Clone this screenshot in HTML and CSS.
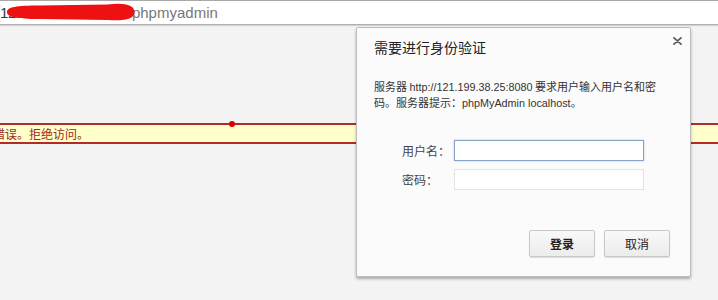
FILE: index.html
```html
<!DOCTYPE html>
<html lang="zh-CN">
<head>
<meta charset="utf-8">
<title>phpmyadmin</title>
<link rel="stylesheet" href="styles.css">
</head>
<body>
<div class="topbar">
  <span class="url"><span class="host">121.199.38.25:8080/</span><span class="path">phpmyadmin</span></span>
  <svg class="scribble" width="140" height="24" viewBox="0 0 140 24"><path d="M7,12 C7,7 16,5.5 40,5.5 L108,4.5 C124,2.5 134.5,5 134.5,12 C134.5,19.5 124,21 108,20 L40,19 C16,19 7,17 7,12 Z" fill="#ee1111"/></svg>
</div>
<div class="page">
  <div class="error">错误。拒绝访问。</div>
  <span class="dot"></span>
</div>
<div class="dialog">
  <div class="head">
    <div class="title">需要进行身份验证</div>
    <svg class="close" width="9" height="8" viewBox="0 0 9 8"><path d="M1,0.8 L8,7.2 M8,0.8 L1,7.2" stroke="#5a5a5a" stroke-width="1.7" stroke-linecap="round"/></svg>
  </div>
  <p class="msg">服务器 <span class="lat">http://121.199.38.25:8080</span> 要求用户输入用户名和密码。服务器提示：<span class="lat">phpMyAdmin localhost</span>。</p>
  <div class="form">
    <label class="lbl">用户名：</label>
    <input class="field focus" type="text">
    <label class="lbl">密码：</label>
    <input class="field" type="password">
  </div>
  <div class="actions">
    <button class="btn primary">登录</button>
    <button class="btn">取消</button>
  </div>
</div>
</body>
</html>
```
FILE: styles.css
```css
html, body {
  margin: 0;
  padding: 0;
}
body {
  width: 718px;
  height: 300px;
  overflow: hidden;
  background: #f3f3f3;
  font-family: "Noto Sans CJK SC", "Liberation Sans", sans-serif;
  position: relative;
}
.topbar {
  position: relative;
  height: 23px;
  background: #fff;
  border-top: 1px solid #a8a8a8;
  border-bottom: 1px solid #b0b0b0;
  box-shadow: 0 1px 1px #d2d2d2;
  display: flex;
  align-items: center;
  font: 15px/22px "Liberation Sans", sans-serif;
  white-space: nowrap;
}
.host {
  color: #3a3a3a;
  letter-spacing: -0.3px;
}
.path {
  color: #777;
}
.scribble {
  position: absolute;
  left: 0;
  top: -1px;
}
.page {
  position: relative;
  padding-top: 98px;
}
.error {
  height: 17px;
  line-height: 17px;
  border-top: 2px solid #b22a2a;
  border-bottom: 2px solid #b22a2a;
  background: #ffffc9;
  color: #9c2a1c;
  font-size: 12px;
  font-family: "Noto Sans CJK TC", sans-serif;
  text-indent: -7px;
  white-space: nowrap;
}
.dot {
  position: absolute;
  left: 229px;
  top: 96px;
  width: 6px;
  height: 6px;
  border-radius: 50%;
  background: #e00000;
}
.dialog {
  position: absolute;
  left: 356px;
  top: 27px;
  width: 335px;
  height: 250px;
  box-sizing: border-box;
  border: 1px solid #bdbdbd;
  border-radius: 2px;
  background: #fbfbfb;
  box-shadow: 0 2px 3px rgba(0, 0, 0, 0.3);
  padding: 9px 8px 0 17px;
  display: flex;
  flex-direction: column;
}
.head {
  display: flex;
  justify-content: space-between;
  align-items: flex-start;
}
.title {
  font-size: 14px;
  line-height: 20px;
  color: #222;
}
.msg {
  margin: 21px 0 0;
  width: 292px;
  height: 32px;
  font-size: 11px;
  line-height: 16px;
  color: #333;
}
.lat {
  font-family: "Liberation Sans", sans-serif;
  font-size: 10.8px;
  line-height: 1;
}
.form {
  margin-top: 30px;
  padding-left: 28px;
  display: grid;
  grid-template-columns: 52px 190px;
  row-gap: 8px;
  align-items: center;
}
.lbl {
  font-size: 12px;
  color: #444;
}
.field {
  height: 21px;
  box-sizing: border-box;
  margin: 0;
  padding: 0 3px;
  border: 1px solid #e2e2e2;
  border-radius: 0;
  background: #fff;
  outline: none;
}
.field.focus {
  border-color: #88a2c4;
  box-shadow: 0 0 2px rgba(110, 150, 200, 0.45);
}
.actions {
  margin-top: 40px;
  margin-right: 12px;
  display: flex;
  justify-content: flex-end;
  gap: 9px;
}
.btn {
  width: 66px;
  height: 27px;
  padding: 0;
  border: 1px solid #c8c8c8;
  border-radius: 2px;
  background: linear-gradient(#f8f8f8, #ececec);
  box-shadow: 0 1px 1px rgba(0, 0, 0, 0.12);
  font-family: "Noto Sans CJK SC", sans-serif;
  font-size: 12px;
  color: #222;
}
.btn.primary {
  font-weight: bold;
}
```
